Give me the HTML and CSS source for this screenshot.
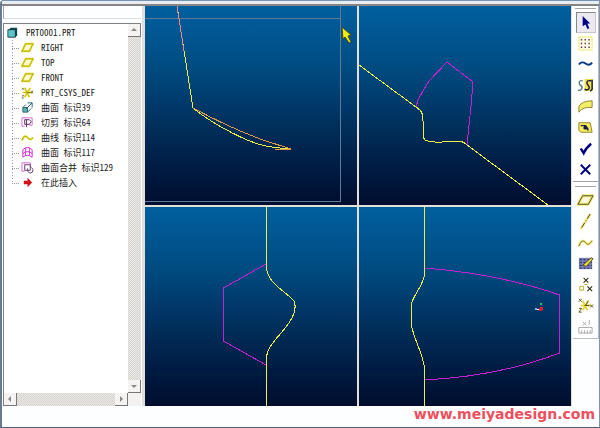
FILE: index.html
```html
<!DOCTYPE html>
<html lang="zh-CN">
<head>
<meta charset="utf-8">
<title>PRT0001.PRT</title>
<link rel="stylesheet" href="styles.css">
</head>
<body>
<div class="window">
  <header class="titlebar"></header>
  <main class="workspace">
    <aside class="sidebar">
      <div class="sidebar-head"></div>
      <div class="tree-box">
        <ul class="tree">
          <li class="root"><svg class="icon" viewBox="0 0 14 14"><path d="M3 4l2-2h7v8l-2 2H3z" fill="#0a4a50"/><path d="M2 4h8v8H2z" fill="#5cc8cc" stroke="#123" stroke-width=".8"/></svg><span>PRT0001.PRT</span></li>
          <li><svg class="icon" viewBox="0 0 14 14"><path d="M5 3h8l-4 8H1z" fill="#fffbd0" stroke="#e8dc20" stroke-width="2"/><path d="M5 3h8l-4 8H1z" fill="none" stroke="#8a8214" stroke-width=".5"/></svg><span>RIGHT</span></li>
          <li><svg class="icon" viewBox="0 0 14 14"><path d="M5 3h8l-4 8H1z" fill="#fffbd0" stroke="#e8dc20" stroke-width="2"/><path d="M5 3h8l-4 8H1z" fill="none" stroke="#8a8214" stroke-width=".5"/></svg><span>TOP</span></li>
          <li><svg class="icon" viewBox="0 0 14 14"><path d="M5 3h8l-4 8H1z" fill="#fffbd0" stroke="#e8dc20" stroke-width="2"/><path d="M5 3h8l-4 8H1z" fill="none" stroke="#8a8214" stroke-width=".5"/></svg><span>FRONT</span></li>
          <li><svg class="icon" viewBox="0 0 14 14"><path d="M2 7h10M4 2l5 10M10 2L4 12" stroke="#d8c800" stroke-width="1.8"/><path d="M1 2l2 2m0-2L1 4M11 5l2 3m0-3l-2 3M1 10h2l-2 3h2M6 7h5" fill="none" stroke="#66601c" stroke-width=".8"/></svg><span>PRT_CSYS_DEF</span></li>
          <li><svg class="icon" viewBox="0 0 14 14"><path d="M2 7h5v5H2z" fill="#5fb5bd" stroke="#366" /><path d="M5 9l7-7M7 2h5v5M2 7l3-3M7 12l4-4" fill="none" stroke="#186070"/></svg><span>曲面 标识39</span></li>
          <li><svg class="icon" viewBox="0 0 14 14"><path d="M4 2H1v9h3M9 2h3v8H9M3 2h6" fill="none" stroke="#dc62d8"/><path d="M4 4h5l2 2-2 3H4zM6 4v8" fill="none" stroke="#532158"/></svg><span>切剪 标识64</span></li>
          <li><svg class="icon" viewBox="0 0 14 14"><path d="M1 10c3-7 5-4 7-2s3 1 5-1" fill="none" stroke="#e5dc20" stroke-width="2"/><path d="M1 10c3-7 5-4 7-2s3 1 5-1" fill="none" stroke="#858015" stroke-width=".6"/></svg><span>曲线 标识114</span></li>
          <li><svg class="icon" viewBox="0 0 14 14"><path d="M2 4q5-5 10 0v8Q7 8 2 12zM5 2v8M9 2v8M2 8q5-4 10 0" fill="none" stroke="#cf24cf"/></svg><span>曲面 标识117</span></li>
          <li><svg class="icon" viewBox="0 0 14 14"><path d="M4 2H1v9h3M3 2h7v5" fill="none" stroke="#dc62d8"/><path d="M4 4h6v6H4zM7 8q0 5 3 5t3-4l-2-2" fill="none" stroke="#633768"/></svg><span>曲面合并 标识129</span></li>
          <li><svg class="icon" viewBox="0 0 14 14"><path d="M3 5h4V2l5 5-5 5V9H3z" fill="#d4121c"/></svg><span>在此插入</span></li>
        </ul>
        <div class="scroll vertical">
          <button type="button" aria-label="向上"><svg viewBox="0 0 8 8"><path d="M1 5l3-3 3 3z"/></svg></button>
          <button type="button" aria-label="向下"><svg viewBox="0 0 8 8"><path d="M1 3l3 3 3-3z"/></svg></button>
        </div>
        <div class="scroll horizontal">
          <button type="button" aria-label="向左"><svg viewBox="0 0 8 8"><path d="M5 1L2 4l3 3z"/></svg></button>
          <button type="button" aria-label="向右"><svg viewBox="0 0 8 8"><path d="M3 1l3 3-3 3z"/></svg></button>
        </div>
        <div class="corner"></div>
      </div>
    </aside>

    <section class="views">
      <svg class="view" viewBox="0 0 212 199" preserveAspectRatio="none">
        <path class="guide" d="M0 12.5H195.500M195.500 0V195.500H0"/>
        <path class="edge" d="M32 0L48 102"/>
        <path class="red" d="M32 0L39 45"/>
        <path class="edge" d="M48 102Q60 112 78 122T110 137Q120 141 146 143"/>
        <path class="orange" d="M48 102Q85 122 118 134L146 143H130"/>
        <path class="pointer" d="M197 21l1 12 2-2 4 6 2-1-3-6 3-1z"/>
      </svg>
      <svg class="view" viewBox="0 0 212 199" preserveAspectRatio="none">
        <path class="edge" d="M0 59L57 101C65 106 64 111 64 118V130Q65 135 69 135L76 136H83L86 135H101Q105 136 108 139L189 199"/>
        <path class="surface" d="M57 101L59 94Q64 84 70 75L88 56L114 76L112 100L108 139"/>
      </svg>
      <svg class="view" viewBox="0 0 212 199" preserveAspectRatio="none">
        <path class="surface" d="M121 57L78.500 81V134L121 158"/>
        <path class="edge" d="M121.500 0V60C122 76 139 83 149 94Q152 101 147 111C139 126 122 137 121.500 151V199"/>
      </svg>
      <svg class="view" viewBox="0 0 212 199" preserveAspectRatio="none">
        <path class="surface" d="M66 61Q141 67 200.500 88V146Q141 169 66 173"/>
        <path class="edge" d="M65.500 0V67C65 77 56 86 53 95L52.500 102V117C53 129 65 148 65.500 162V199"/>
        <path d="M178 102h4" stroke="#fff"/>
        <circle cx="182" cy="97" r="1.500" fill="#19cf4a"/><circle cx="182" cy="102" r="2" fill="#e01838"/><circle cx="177" cy="102" r="1.500" fill="#55c6f0"/>
      </svg>
    </section>

    <nav class="toolbar">
      <div class="tools">
        <button type="button" class="active" aria-label="选择"><svg viewBox="0 0 18 18"><path d="M6 2v11l3-2 2 5 2-1-2-5h3z" fill="#000085"/></svg></button>
        <button type="button" aria-label="点阵"><svg viewBox="0 0 18 18"><path d="M2 2h14v14H2z" fill="#fffce0" stroke="#e8df3c" stroke-dasharray="2 1"/><path d="M4 5h11M4 9h11M4 13h11" stroke="#66336c" stroke-width="1.500" stroke-dasharray="1.500 2.500"/></svg></button>
        <button type="button" aria-label="曲线"><svg viewBox="0 0 18 18"><path d="M2 9q3-4 7-1t7-1" fill="none" stroke="#063a87" stroke-width="2"/></svg></button>
        <button type="button" aria-label="复制曲线"><svg viewBox="0 0 18 18"><path d="M8 2h9v13H8z" fill="#eee34c"/><path d="M6 4C1 3 2 8 4 9s2 6-3 5" fill="none" stroke="#568176" stroke-width="1.500"/><path d="M15 4c-6-1-5 3-3 5s1 6-4 4M16 3v10l-2 2" fill="none" stroke="#16163f" stroke-width="1.500"/></svg></button>
        <button type="button" aria-label="曲面"><svg viewBox="0 0 18 18"><path d="M2 15V9q3-6 14-6v7Q6 9 2 15z" fill="#f4ed67" stroke="#88842a"/></svg></button>
        <button type="button" aria-label="编辑曲面"><svg viewBox="0 0 18 18"><path d="M2 4h12l2 10H4L2 12z" fill="#f5ec58" stroke="#88842a"/><path d="M4 7h5l3 5M7 10h5" fill="none" stroke="#18194d" stroke-width="1.500"/><circle cx="9" cy="9" r="2" fill="#18194d"/></svg></button>
        <button type="button" aria-label="确定"><svg viewBox="0 0 18 18"><path d="M4 9l3 5q2-5 8-10" fill="none" stroke="#00007d" stroke-width="2.500"/></svg></button>
        <button type="button" aria-label="取消"><svg viewBox="0 0 18 18"><path d="M4 4l10 10M14 4L4 14" stroke="#00007d" stroke-width="2"/></svg></button>
      </div>
      <div class="tools">
        <button type="button" aria-label="基准平面"><svg viewBox="0 0 18 18"><path d="M6 4h11l-5 9H1z" fill="#fffce0" stroke="#eee67a" stroke-width="3"/><path d="M6 4h11l-5 9H1z" fill="none" stroke="#55521c"/></svg></button>
        <button type="button" aria-label="基准轴"><svg viewBox="0 0 18 18"><path d="M14 1L4 17" stroke="#f1e981" stroke-width="3"/><path d="M14 1L4 17" stroke="#45411a" stroke-dasharray="6 2 1 2"/></svg></button>
        <button type="button" aria-label="基准曲线"><svg viewBox="0 0 18 18"><path d="M2 13c3-9 6-5 8-3s4 0 6-3" fill="none" stroke="#f1e981" stroke-width="3"/><path d="M2 13c3-9 6-5 8-3s4 0 6-3" fill="none" stroke="#77732a"/></svg></button>
        <button type="button" aria-label="草绘"><svg viewBox="0 0 18 18"><path d="M2 3h14v12H2z" fill="#777ab4"/><path d="M3 5h13M3 8h13M3 11h13M3 14h13" stroke="#212152" stroke-dasharray="2 2"/><path d="M6 11L15 3l2 1-7 8z" fill="#e7de40" stroke="#55521c"/></svg></button>
        <button type="button" aria-label="基准点"><svg viewBox="0 0 18 18"><path d="M7 2l5 5m0-5L7 7M11 11l5 5m0-5l-5 5" stroke="#333018" stroke-width="1.200"/><path d="M3 11h4v4H3zM8 9h3" fill="none" stroke="#b8ab25"/></svg></button>
        <button type="button" aria-label="坐标系"><svg viewBox="0 0 18 18"><path d="M4 9h11M6 4l5 10M12 4L6 14" stroke="#e3d944" stroke-width="2"/><path d="M2 2l3 3m0-3L2 5M14 8l3 3m0-3l-3 3M2 12h3l-3 4h3M8 9h5M9 9l3-5" fill="none" stroke="#55521c"/></svg></button>
        <button type="button" aria-label="分析"><svg viewBox="0 0 18 18"><path d="M2 10h14v6H2zM5 13v3M8 13v3M11 13v3M14 13v3M6 4l4 4m0-4L6 8M13 2v5" fill="none" stroke="#a6a6a6"/></svg></button>
      </div>
    </nav>
  </main>
  <footer class="footer">www.meiyadesign.com</footer>
</div>
</body>
</html>
```
FILE: styles.css
```css
* { box-sizing: border-box; }
body { margin: 0; background: #fff; font-family: "Noto Sans CJK SC", sans-serif; }
button { padding: 0; border: 0; background: none; }
svg { display: block; }

.window {
  display: grid;
  grid-template-rows: auto 1fr auto;
  min-height: 100vh;
  background: #fdfeff;
  border-left: 2px solid #697b91;
  border-right: 1px solid #8194ad;
  border-bottom: 1px solid #4d5d75;
  border-top-left-radius: 4px;
}
.titlebar {
  height: 6px;
  border-top: 1px solid #7894b4;
  border-bottom: 2px solid #858585;
  background: #e8edf2;
}
.workspace {
  display: grid;
  grid-template-columns: 139px 1fr 26px;
  column-gap: 1px;
}

.sidebar { display: flex; flex-direction: column; padding-left: 1px; }
.sidebar-head { height: 13px; margin-bottom: 4px; border-left: 1px solid #a0a0a0; border-bottom: 1px solid #ddd; }
.tree-box {
  flex: 1;
  display: grid;
  grid-template-columns: 1fr 13px;
  grid-template-rows: 1fr 13px;
  border-top: 1px solid #808080;
  border-left: 1px solid #808080;
  background: #fff;
}
.tree {
  margin: 0;
  padding: 1px 0 0 2px;
  list-style: none;
  font-size: 9px;
  line-height: 15px;
  font-feature-settings: "hwid";
  color: #222;
  white-space: nowrap;
}
.tree li { display: flex; align-items: center; height: 15px; }
.tree li:not(.root) {
  margin-left: 6px;
  padding-left: 9px;
  gap: 7px;
  background:
    repeating-linear-gradient(90deg, #999 0 1px, transparent 1px 2px) 0 8px / 7px 1px no-repeat,
    repeating-linear-gradient(#999 0 1px, transparent 1px 3px) 0 0 / 1px 100% no-repeat;
}
.tree li:last-child {
  background:
    repeating-linear-gradient(90deg, #999 0 1px, transparent 1px 2px) 0 8px / 7px 1px no-repeat,
    repeating-linear-gradient(#999 0 1px, transparent 1px 3px) 0 0 / 1px 8px no-repeat;
}
.tree .root { gap: 7px; }
.icon { width: 13px; height: 13px; flex: none; }

.scroll {
  display: flex;
  justify-content: space-between;
  background: repeating-conic-gradient(#d6d3ce 0 25%, #eceae7 0 50%) 0 0 / 2px 2px;
}
.vertical { flex-direction: column; }
.scroll button {
  display: grid;
  place-items: center;
  width: 13px;
  height: 13px;
  background: #f4f3f1;
  border-right: 1px solid #777;
  border-bottom: 1px solid #777;
}
.scroll svg { width: 8px; height: 8px; fill: #888; }
.corner { background: #f3f2f0; }

.views {
  display: grid;
  grid-template-columns: 1fr 1fr;
  grid-template-rows: 1fr 1fr;
  gap: 2px;
  padding: 0 1px 0 2px;
  border-left: 1px solid #ddd;
  background: #e3dfd9;
}
.view {
  width: 100%;
  height: 100%;
  min-height: 120px;
  background: linear-gradient(#005f9f, #004c82 30%, #003260 57%, #001b42 82%, #000d2f);
  fill: none;
  shape-rendering: crispEdges;
}
.view path { vector-effect: non-scaling-stroke; }
.edge { stroke: #e9ee48; }
.orange { stroke: #d99a4a; }
.red { stroke: #e88a80; }
.surface { stroke: #c321d2; }
.guide { stroke: #5e7a94; }
.pointer { fill: #f0ec18; stroke: #4b4a10; shape-rendering: auto; }

.toolbar {
  align-self: start;
  border-right: 1px solid #b9bcc2;
  border-bottom: 1px solid #b9bcc2;
  background: #fff;
}
.tools { display: grid; justify-items: center; padding: 6px 2px 1px; }
.tools::before { content: ""; width: 100%; height: 1px; margin-top: -4px; margin-bottom: 3px; background: #a5a5a5; }
.tools + .tools { padding-top: 8px; border-top: 1px solid #a5a5a5; }
.tools button { display: grid; place-items: center; width: 20px; height: 21px; }
.tools svg { width: 17px; height: 17px; }
.tools .active { background: #eceaf0; border: 1px solid #c8c5cf; border-top-color: #888; border-left-color: #888; }

.footer {
  height: 21px;
  padding-right: 4px;
  font: bold 14px/16px "DejaVu Sans", sans-serif;
  text-align: right;
  color: #ee4f5c;
}
```
